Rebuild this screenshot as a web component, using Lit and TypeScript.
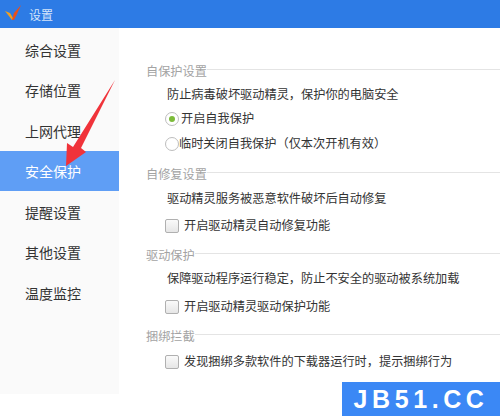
import { LitElement, html, css } from "lit";
import { customElement } from "lit/decorators.js";

const NAV = ["综合设置", "存储位置", "上网代理", "安全保护", "提醒设置", "其他设置", "温度监控"];

@customElement("app-root")
export class AppRoot extends LitElement {
  static styles = css`
    :host {
      display: block;
      position: relative;
      width: 500px;
      height: 416px;
      overflow: hidden;
      background: #fff;
      font-family: "Liberation Sans", "Noto Sans CJK SC", sans-serif;
      color: #333;
    }
    .title {
      height: 28px;
      background: #2d7be5;
      display: flex;
      align-items: center;
      gap: 6px;
      padding-left: 5px;
      color: #d5e5fb;
      font-size: 12px;
    }
    .body { display: flex; height: 388px; }
    .side {
      width: 119px;
      height: 366px;
      background: #fafafa;
      padding-top: 1px;
      box-sizing: border-box;
      flex: none;
    }
    .nav {
      height: 40.5px;
      box-sizing: border-box;
      padding: 1px 0 0 25px;
      display: flex;
      align-items: center;
      font-size: 14px;
      color: #333;
    }
    .nav.on { background: #5f9ef5; color: #fff; }
    .main { flex: 1; padding-top: 36px; display: flex; flex-direction: column; }
    .group { display: flex; flex-direction: column; }
    .g2 { margin-top: 15px; }
    .g3, .g4 { margin-top: 14px; }
    .legend {
      display: flex;
      align-items: center;
      padding-left: 27px;
      font-size: 12.2px;
      line-height: 16px;
      color: #a3a3a3;
    }
    .legend::after { content: ""; flex: 1; height: 1px; background: #e4e4e4; margin-top: -5px; }
    .desc { padding: 7px 0 0 48px; font-size: 12.2px; line-height: 16px; color: #333; }
    .g2 .desc { padding-top: 8px; }
    .opt { display: flex; align-items: center; padding-left: 46px; font-size: 12.2px; line-height: 16px; color: #333; }
    .o1 { margin-top: 8px; }
    .o2 { margin-top: 9px; }
    .g2 .opt { margin-top: 11px; }
    .g3 .opt { margin-top: 12px; }
    .g4 .opt { margin-top: 9px; }
    .radio {
      width: 12px; height: 12px; border-radius: 50%; border: 1px solid #bdbdbd;
      background: #fff; display: flex; align-items: center; justify-content: center; flex: none;
    }
    .o1 .radio { margin-right: 2px; }
    .o2 .radio { margin-right: 0; }
    .radio.on::after { content: ""; width: 6px; height: 6px; border-radius: 50%; background: #7cbb3a; }
    .check {
      width: 12px; height: 12px; border: 1px solid #b0b0b0; border-radius: 2px;
      background: linear-gradient(#fafafa, #e6e6e6); margin-right: 5px; flex: none;
    }
    .arrow { position: absolute; left: 0; top: 0; pointer-events: none; }
    .mark {
      position: absolute; left: 342px; top: 382px; width: 158px; height: 34px;
      background: #3b88f5; color: #fff; font-weight: 700; font-size: 25px;
      letter-spacing: 4.6px; display: flex; align-items: center; justify-content: center;
    }
  `;

  render() {
    return html`
      <div class="title">
        <svg width="18" height="18" viewBox="0 0 18 18">
          <path d="M0 6 L5 8 L8 13 L9 15 L7 15 Z" fill="#f0a020"/>
          <path d="M7 15 L9 8 L16 0 L12 9 L9 15 Z" fill="#e8501c"/>
        </svg>
        <span>设置</span>
      </div>
      <div class="body">
        <div class="side">
          ${NAV.map((n, i) => html`<div class="nav ${i === 3 ? "on" : ""}">${n}</div>`)}
        </div>
        <div class="main">
          <div class="group">
            <div class="legend">自保护设置</div>
            <div class="desc">防止病毒破坏驱动精灵，保护你的电脑安全</div>
            <div class="opt o1"><span class="radio on"></span>开启自我保护</div>
            <div class="opt o2"><span class="radio"></span>临时关闭自我保护（仅本次开机有效）</div>
          </div>
          <div class="group g2">
            <div class="legend">自修复设置</div>
            <div class="desc">驱动精灵服务被恶意软件破坏后自动修复</div>
            <div class="opt"><span class="check"></span>开启驱动精灵自动修复功能</div>
          </div>
          <div class="group g3">
            <div class="legend">驱动保护</div>
            <div class="desc">保障驱动程序运行稳定，防止不安全的驱动被系统加载</div>
            <div class="opt"><span class="check"></span>开启驱动精灵驱动保护功能</div>
          </div>
          <div class="group g4">
            <div class="legend">捆绑拦截</div>
            <div class="opt"><span class="check"></span>发现捆绑多款软件的下载器运行时，提示捆绑行为</div>
          </div>
        </div>
      </div>
      <svg class="arrow" width="500" height="416" viewBox="0 0 500 416">
        <path d="M115 80 L81 148 L86 152 L66 166 L67 143 L73 147 Z" fill="#f0333a"/>
      </svg>
      <div class="mark">JB51.CC</div>
    `;
  }
}
